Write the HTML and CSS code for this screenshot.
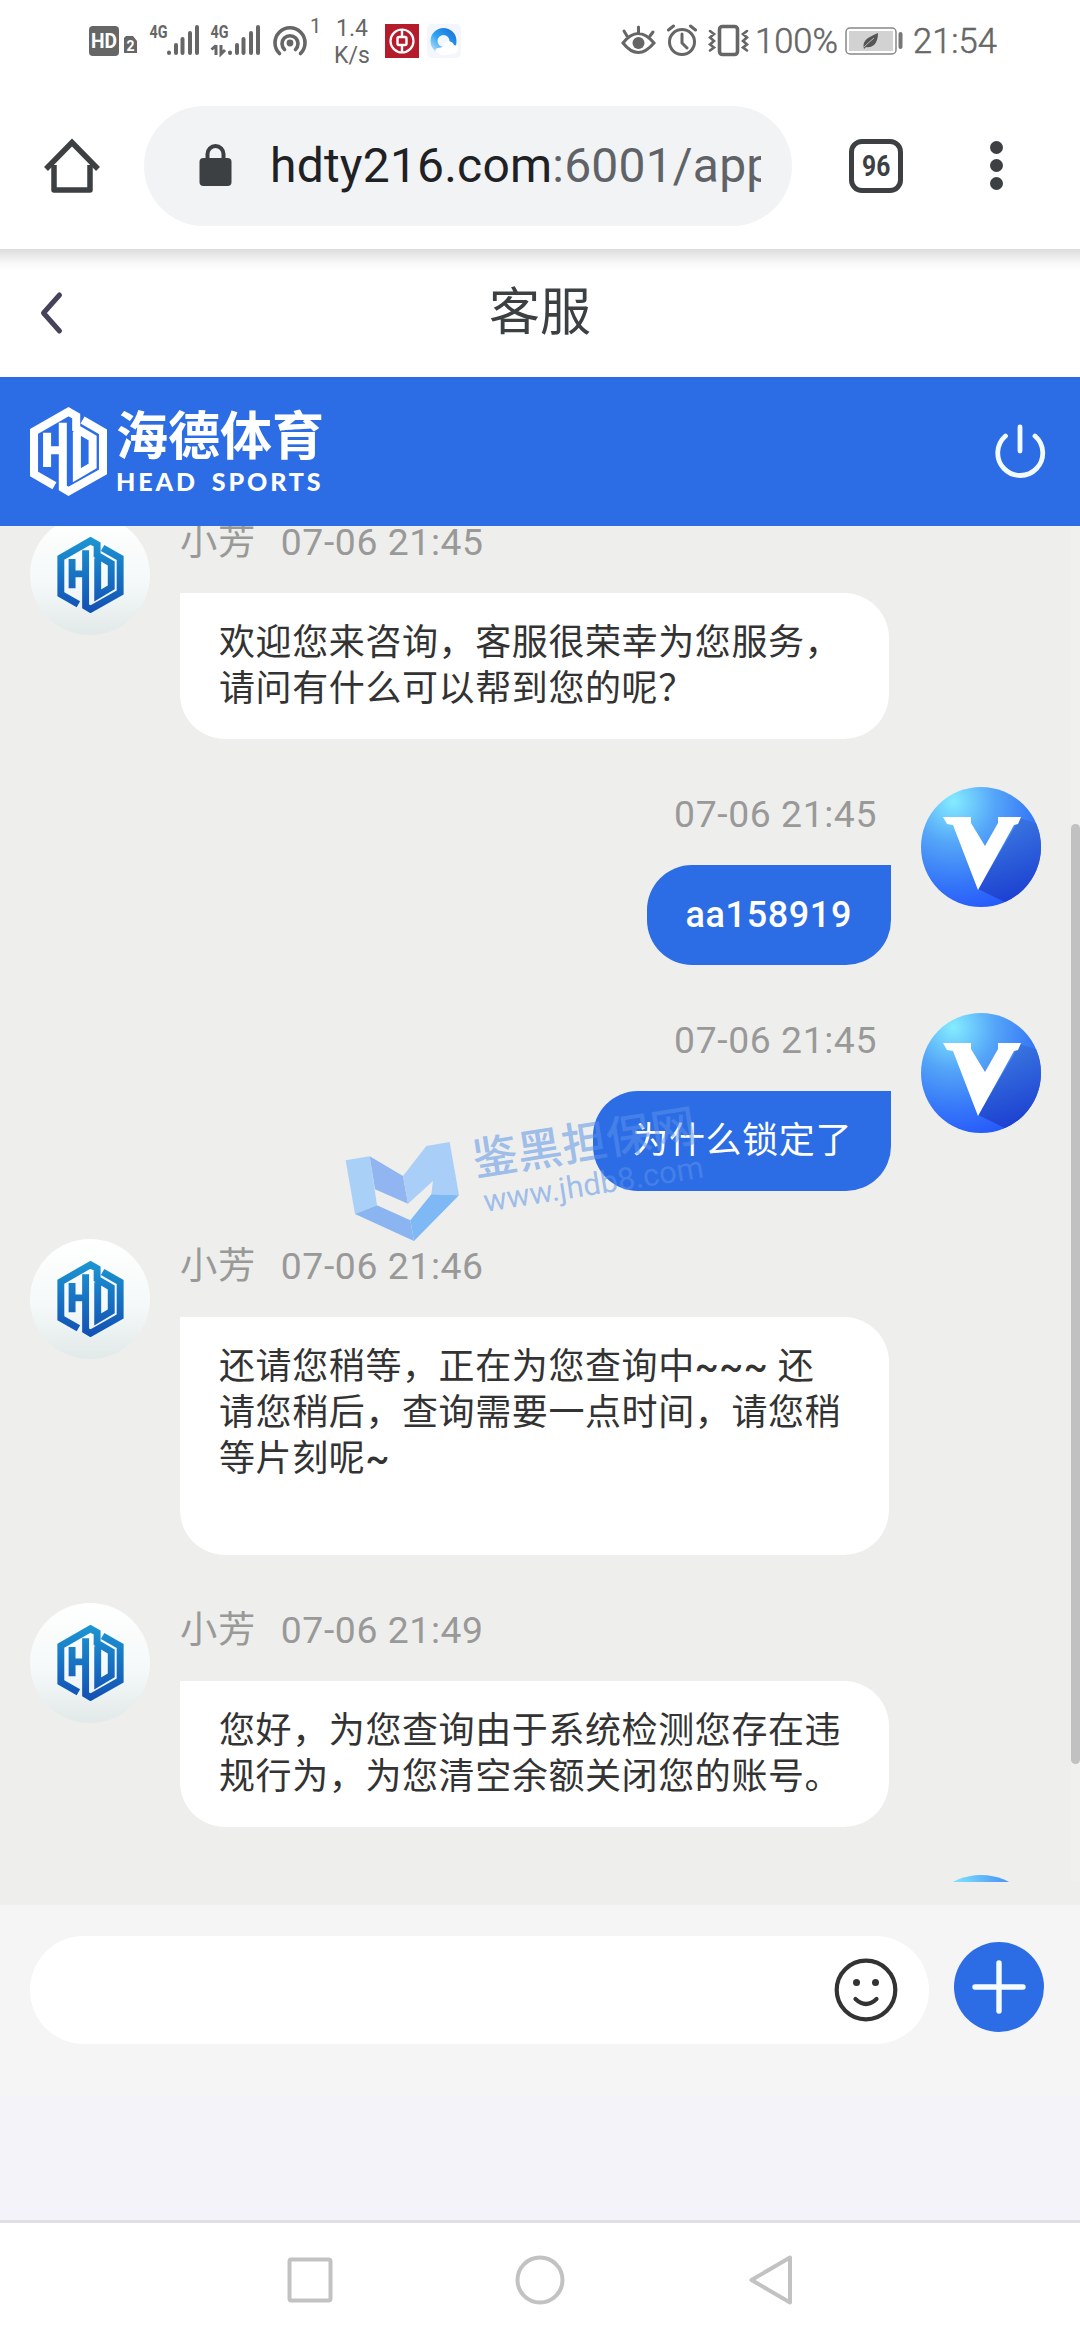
FILE: index.html
```html
<!DOCTYPE html>
<html lang="zh-CN">
<head>
<meta charset="utf-8">
<title>客服</title>
<link rel="stylesheet" href="styles.css">
</head>
<body>
<svg class="defs" width="0" height="0" aria-hidden="true">
  <defs>
    <linearGradient id="hd-blue" gradientUnits="userSpaceOnUse" x1="0" y1="0" x2="0" y2="264">
      <stop offset="0" stop-color="#1c97d2"/><stop offset="1" stop-color="#124fb4"/>
    </linearGradient>
    <radialGradient id="v-bg" cx=".27" cy=".12" r="1">
      <stop offset="0" stop-color="#84ecff"/><stop offset=".35" stop-color="#54a5f8"/><stop offset=".68" stop-color="#3677f8"/><stop offset="1" stop-color="#2251fb"/>
    </radialGradient>
    <linearGradient id="v-shade" x1="0" y1="0" x2=".2" y2="1">
      <stop offset="0" stop-color="#3b76d8" stop-opacity=".7"/><stop offset="1" stop-color="#1c40d0"/>
    </linearGradient>
    <clipPath id="v-clip"><circle cx="60" cy="60" r="60"/></clipPath>
    <symbol id="hd" viewBox="0 0 230 264">
      <g fill="none" stroke-width="24" stroke-linejoin="miter">
        <path d="M73 234 L12 199 V72 L115 13 L138 26 V63 L187 92 V175 L140 203 V74"/>
        <path d="M157 38 L218 73 V193 L115 251 L98 241 V46"/>
        <path d="M51 76 V178 M51 128 H98"/>
      </g>
    </symbol>
    <symbol id="vip" viewBox="0 0 120 120">
      <g clip-path="url(#v-clip)">
        <rect width="120" height="120" fill="url(#v-bg)"/>
        <path d="M99 31 L120 38 V120 L90 118 L57 102 Z" fill="url(#v-shade)"/>
      </g>
      <path d="M22 30 H50 V36 L64 59 L77 36 V30 H100 L97 37 L93 38 L57 103 L32 38 L26 37 Z" fill="#fff"/>
    </symbol>
  </defs>
</svg>

<div class="statusbar">
  <svg class="st-left" width="234" height="50" viewBox="86 15 234 50">
    <rect x="89" y="26" width="30" height="30" rx="4" fill="#666"/>
    <text x="91" y="48" class="t-hd" textLength="26" lengthAdjust="spacingAndGlyphs">HD</text>
    <path d="M126 36h7l4 5v12h-13V38z" fill="#666"/>
    <text x="126.500" y="50.500" class="t-sim">2</text>
    <text x="149.500" y="38" class="t-4g" textLength="18" lengthAdjust="spacingAndGlyphs">4G</text>
    <text x="210.500" y="38" class="t-4g" textLength="18" lengthAdjust="spacingAndGlyphs">4G</text>
    <g stroke="#666" stroke-width="4" stroke-linecap="round" fill="none">
      <path d="M169 52.500v.5M176 45v8M182.500 39v14M190 33v20M197 27v26"/>
      <path d="M230 52.500v.5M237 45v8M243.500 39v14M251 33v20M258 27v26"/>
      <path d="M279.500 53.500a15 15 0 1 1 21 0" stroke-width="3.600"/>
      <path d="M284.500 49.500a8 8 0 1 1 11 0" stroke-width="3.600"/>
    </g>
    <path d="M216 45v10M211.500 49.500l4.500-4M221 45v9l4-4" stroke="#666" stroke-width="3" fill="none"/>
    <circle cx="290" cy="43" r="3.400" fill="#666"/>
    <text x="310" y="33" class="t-one">1</text>
  </svg>
  <div class="speed"><span>1.4</span><span>K/s</span></div>
  <svg class="st-boc" width="34" height="34" viewBox="0 0 34 34">
    <rect width="34" height="34" fill="#b51b2b"/>
    <g fill="none" stroke="#fff"><circle cx="17" cy="17" r="11.500" stroke-width="2.200"/><rect x="12.500" y="13" width="9" height="8" rx="1.500" stroke-width="2.400"/><path d="M17 5v8M17 21v8" stroke-width="2.400"/></g>
  </svg>
  <svg class="st-qq" width="34" height="34" viewBox="0 0 34 34">
    <defs><linearGradient id="qq" x1="0" y1="1" x2="1" y2="0"><stop offset="0" stop-color="#a8d8fb"/><stop offset=".45" stop-color="#2ba2f3"/><stop offset="1" stop-color="#1c78dd"/></linearGradient></defs>
    <rect width="34" height="34" rx="5" fill="#f3f7fb"/>
    <circle cx="16.500" cy="17" r="9.500" fill="none" stroke="url(#qq)" stroke-width="7"/>
    <path d="M9 28q-2-3 2-4 3 0 6-2 0-5 5-5 4 1 5 4 5 1 4 5-1 4-6 4-10 3-16-2" fill="#fff"/>
  </svg>
  <svg class="st-right" width="130" height="34" viewBox="620 24 130 34">
    <g fill="none" stroke="#666" stroke-width="3" stroke-linecap="round">
      <path d="M622 43q15-19 31 0-16 19-31 0zM637.500 33v-6M626 36l-3-5M649 36l3-4"/>
      <circle cx="681" cy="42" r="12.500"/><path d="M681 34v9l5 5M667.500 30l5-4M694.500 30l-5-4"/>
      <rect x="718.500" y="26.500" width="18" height="28" rx="3" stroke-width="3.600"/>
      <path d="M709 31l4 3-4 3.500 4 3.500-4 3.500 4 3-4 3M746 31l-4 3 4 3.500-4 3.500 4 3.500-4 3 4 3" stroke-width="2.600"/>
    </g>
    <circle cx="637.500" cy="43" r="6" fill="#666"/>
  </svg>
  <span class="pct">100%</span>
  <svg class="st-batt" width="60" height="28" viewBox="0 0 60 28">
    <rect x="1" y="1" width="50" height="26" rx="4" fill="#fff" stroke="#888" stroke-width="1.500"/>
    <rect x="4" y="4" width="44" height="20" fill="#d2d2d2"/>
    <path d="M19 22q-2-7 4-11 5-3 10-5 0 8-4 12-4 3-8 2z" fill="#555"/><path d="M19 20q5-5 10-9" stroke="#bbb" fill="none"/>
    <path d="M55.500 7v13" stroke="#777" stroke-width="4" stroke-linecap="round"/>
  </svg>
  <span class="clock">21:54</span>
</div>

<div class="toolbar">
  <svg class="home" width="58" height="58" viewBox="43 136 58 58" fill="none" stroke="#3c4043" stroke-width="5.500" stroke-linejoin="round">
    <path d="M54 164V189H90V164"/><path d="M46 168L72 141.500L98 168" stroke-linejoin="miter"/>
  </svg>
  <div class="omnibox">
    <svg width="34" height="44" viewBox="0 0 34 44"><rect x=".5" y="15" width="32" height="28" rx="4" fill="#3c4043"/><path d="M8.500 16v-5a8 8 0 0 1 16 0v5" fill="none" stroke="#3c4043" stroke-width="4"/></svg>
    <div class="url">hdty216.com<span>:6001/app</span></div>
  </div>
  <div class="tabs"><span>96</span></div>
  <div class="dots"><i></i><i></i><i></i></div>
</div>

<div class="page">
  <div class="titlebar">
    <svg width="30" height="46" viewBox="0 0 30 46"><path d="M23.500 5L7.500 23l16 18" fill="none" stroke="#46425a" stroke-width="5" stroke-linecap="round" stroke-linejoin="round"/></svg>
    <h1>客服</h1>
  </div>
  <div class="brandbar">
    <svg class="brand-mark" width="77" height="89" stroke="#fff"><use href="#hd"/></svg>
    <div class="brand-text"><strong>海德体育</strong><span>HEAD SPORTS</span></div>
    <svg class="power" width="54" height="58" viewBox="0 0 54 58" fill="none" stroke="#f2fbff" stroke-width="4.800" stroke-linecap="round"><path d="M27 4v24M12.500 13a22.500 22.500 0 1 0 29.500 0"/></svg>
  </div>

  <div class="chat">
    <div class="list">
      <div class="msg">
        <div class="avatar"><svg width="67" height="76" stroke="url(#hd-blue)"><use href="#hd"/></svg></div>
        <div class="body"><div class="meta"><span>小芳</span><time>07-06 21:45</time></div>
        <div class="bubble">欢迎您来咨询，客服很荣幸为您服务，<br>请问有什么可以帮到您的呢？</div></div>
      </div>
      <div class="msg mine">
        <svg class="vip" width="120" height="120"><use href="#vip"/></svg>
        <div class="body"><div class="meta"><time>07-06 21:45</time></div><div class="bubble strong">aa158919</div></div>
      </div>
      <div class="msg mine">
        <svg class="vip" width="120" height="120"><use href="#vip"/></svg>
        <div class="body"><div class="meta"><time>07-06 21:45</time></div><div class="bubble">为什么锁定了</div></div>
      </div>
      <div class="msg">
        <div class="avatar"><svg width="67" height="76" stroke="url(#hd-blue)"><use href="#hd"/></svg></div>
        <div class="body"><div class="meta"><span>小芳</span><time>07-06 21:46</time></div>
        <div class="bubble">还请您稍等，正在为您查询中<b>~~~</b> 还<br>请您稍后，查询需要一点时间，请您稍<br>等片刻呢<b>~</b><br><br></div></div>
      </div>
      <div class="msg">
        <div class="avatar"><svg width="67" height="76" stroke="url(#hd-blue)"><use href="#hd"/></svg></div>
        <div class="body"><div class="meta"><span>小芳</span><time>07-06 21:49</time></div>
        <div class="bubble">您好，为您查询由于系统检测您存在违<br>规行为，为您清空余额关闭您的账号。</div></div>
      </div>
      <div class="msg mine">
        <svg class="vip" width="120" height="120"><use href="#vip"/></svg>
      </div>
    </div>
    <div class="track"><div class="thumb"></div></div>
    <div class="watermark">
      <svg width="116" height="102" viewBox="76 185 348 306">
        <path d="M78 243L150 231L172 378L106 404Z" fill="#a6cff8"/>
        <path d="M150 231L250 290L265 373L166 330Z" fill="#8db2f2"/>
        <path d="M250 290L320 200L390 188L418 348L335 345L340 305L265 373Z" fill="#a6cdf8"/>
        <path d="M106 404L172 378L272 423L283 485Z" fill="#86b2f1"/>
        <path d="M272 423L335 345L418 348L283 485Z" fill="#79b7f6"/>
      </svg>
      <div class="wm-text"><strong>鉴黑担保网</strong><span>www.jhdb8.com</span></div>
    </div>
  </div>

  <div class="composer">
    <div class="input">
      <svg width="64" height="64" viewBox="0 0 64 64" fill="none" stroke="#333" stroke-width="4.200" stroke-linecap="round"><circle cx="32" cy="32" r="29.300"/><path d="M21.500 41q10.500 10 21 0"/><g fill="#333" stroke="none"><circle cx="22.500" cy="24.500" r="3.500"/><circle cx="41.500" cy="24.500" r="3.500"/></g></svg>
    </div>
    <svg class="plus" width="90" height="90" viewBox="0 0 90 90"><circle cx="45" cy="45" r="45" fill="#2c6de6"/><path d="M45 21v48M21 45h48" stroke="#f4fcff" stroke-width="5.400" stroke-linecap="round"/></svg>
  </div>
</div>

<div class="navbar">
  <svg width="50" height="54" viewBox="0 0 50 54"><rect x="4.500" y="6.500" width="41" height="41" rx="2"/></svg>
  <svg width="50" height="54" viewBox="0 0 50 54"><circle cx="25" cy="27" r="22.500"/></svg>
  <svg width="50" height="54" viewBox="0 0 50 54"><path d="M45 4.500v45L6.500 27z"/></svg>
</div>
</body>
</html>
```
FILE: styles.css
```css
* { box-sizing: border-box; }
body { margin: 0; width: 1080px; height: 2340px; overflow: hidden; display: flex; flex-direction: column; background: #f3f3f9; font-family: Roboto, "Noto Sans CJK SC", sans-serif; }
svg { display: block; flex: none; }
.defs { position: absolute; }

.statusbar { height: 85px; flex: none; background: #fff; display: flex; align-items: flex-start; padding-left: 86px; color: #666; }
.st-left { margin-top: 15px; }
.t-hd { font: 700 20px Roboto, sans-serif; fill: #fff; }
.t-sim { font: 700 14px Roboto, sans-serif; fill: #fff; }
.t-4g { font: 700 19px Roboto, sans-serif; fill: #666; }
.t-one { font: 400 20px Roboto, sans-serif; fill: #666; }
.speed { display: flex; flex-direction: column; align-items: center; width: 40px; margin: 15px 0 0 12px; font-size: 23px; line-height: 27px; }
.st-boc { margin: 24px 0 0 13px; }
.st-qq { margin: 24px 0 0 8px; }
.st-right { margin: 24px 0 0 160px; }
.pct, .clock { font-weight: 300; font-size: 34.500px; line-height: 40px; margin-top: 21px; -webkit-text-stroke: .5px #666; }
.pct { width: 90px; margin-left: 4px; }
.st-batt { margin-top: 27px; }
.clock { margin-left: 8px; }

.toolbar { height: 164px; flex: none; background: #fff; display: flex; align-items: center; padding: 0 0 3px 43px; }
.omnibox { width: 648px; height: 120px; margin-left: 43px; padding: 0 30px 0 55px; border-radius: 60px; background: #f1f3f4; display: flex; align-items: center; }
.omnibox svg { margin-top: -2px; }
.url { margin-left: 37px; width: 491px; overflow: hidden; white-space: nowrap; font-size: 48px; line-height: 64px; color: #202124; letter-spacing: .2px; }
.url span { color: #5f6368; }
.tabs { width: 54px; height: 54px; margin-left: 57px; border: 5.500px solid #3c4043; border-radius: 13px; display: flex; align-items: center; justify-content: center; font: 700 30px Roboto, sans-serif; color: #3c4043; }
.tabs span { transform: scaleX(.82); }
.dots { display: flex; flex-direction: column; gap: 5px; margin-left: 87px; }
.dots i { width: 13px; height: 13px; border-radius: 50%; background: #3c4043; }

.page { flex: none; height: 1971px; display: flex; flex-direction: column; }
.titlebar { height: 128px; flex: none; background: linear-gradient(#dcdcdc, #e6e6e6 5px, #f8f8f8 14px, #fff 22px); display: grid; grid-template-columns: 36px 1fr 72px; align-items: center; padding-left: 36px; }
.titlebar h1 { margin: 0; text-align: center; font-size: 51px; line-height: 64px; font-weight: 400; color: #3c4043; }
.brandbar { height: 149px; flex: none; background: #2c6de6; display: flex; align-items: center; padding: 0 33px 0 30px; }
.brand-text { display: flex; flex-direction: column; margin-left: 9px; color: #fff; flex: 1; }
.brand-text strong { font-size: 52px; line-height: 58px; font-weight: 700; }
.brand-text span { font: 900 25px/28px Lato, sans-serif; letter-spacing: 2.900px; word-spacing: 5px; }

.chat { height: 1379px; flex: none; background: #eeeeec; position: relative; display: flex; justify-content: space-between; }
.list { width: 1071px; height: 1356px; overflow: hidden; display: flex; flex-direction: column; gap: 48px; }
.list .msg:first-child { margin-top: -11px; }
.msg { display: flex; flex: none; align-items: flex-start; padding: 0 30px; gap: 30px; }
.mine { flex-direction: row-reverse; }
.avatar { width: 120px; height: 120px; border-radius: 50%; background: linear-gradient(#fff, #f5f9f9 55%, #e2e9e9); display: flex; align-items: center; justify-content: center; }
.body { display: flex; flex-direction: column; align-items: flex-start; }
.mine .body { align-items: flex-end; }
.meta { height: 78px; padding-top: 4px; display: flex; gap: 25px; font-size: 37.300px; line-height: 46px; letter-spacing: .6px; color: #999; }
.mine .meta { padding-right: 14px; }
.bubble { padding: 27px 39px; border-radius: 0 45px 45px 45px; background: #fff; color: #333; font-size: 36px; line-height: 46px; letter-spacing: .6px; white-space: nowrap; }
.msg:not(.mine) .bubble { width: 709px; }
.mine .bubble { background: #2c6de6; color: #fff; border-radius: 45px 0 45px 45px; }
.bubble.strong { font-weight: 500; }
.bubble b { font-weight: 500; }
.track { width: 9px; height: 1356px; background: #f0f0ee; padding-top: 298px; }
.thumb { width: 9px; height: 940px; background: #c1c1c1; border-radius: 5px; }

.watermark { position: absolute; left: 345px; top: 615px; display: flex; }
.watermark svg { opacity: .95; }
.wm-text { position: absolute; left: 131px; top: -5px; display: flex; flex-direction: column; white-space: nowrap; transform: rotate(-9deg); transform-origin: 0 50%; color: rgba(90, 146, 232, .55); }
.wm-text strong { font-size: 45px; line-height: 49px; font-weight: 500; }
.wm-text span { font-size: 31px; line-height: 36px; margin-left: 4px; }

.composer { height: 191px; flex: none; background: #f5f5f5; display: flex; align-items: flex-start; padding: 31px 36px 0 30px; gap: 25px; }
.input { width: 900px; height: 108px; border-radius: 54px; background: #fff; display: flex; align-items: center; justify-content: flex-end; padding-right: 31px; }
.plus { margin-top: 6px; }
.page > .composer { margin-bottom: 124px; }
.navbar { flex: none; height: 120px; background: #fff; border-top: 3px solid #dfe0e5; display: flex; justify-content: center; padding-top: 30px; gap: 180px; }
.navbar svg { fill: none; stroke: #c2c2c2; stroke-width: 4; stroke-linejoin: round; }
```
